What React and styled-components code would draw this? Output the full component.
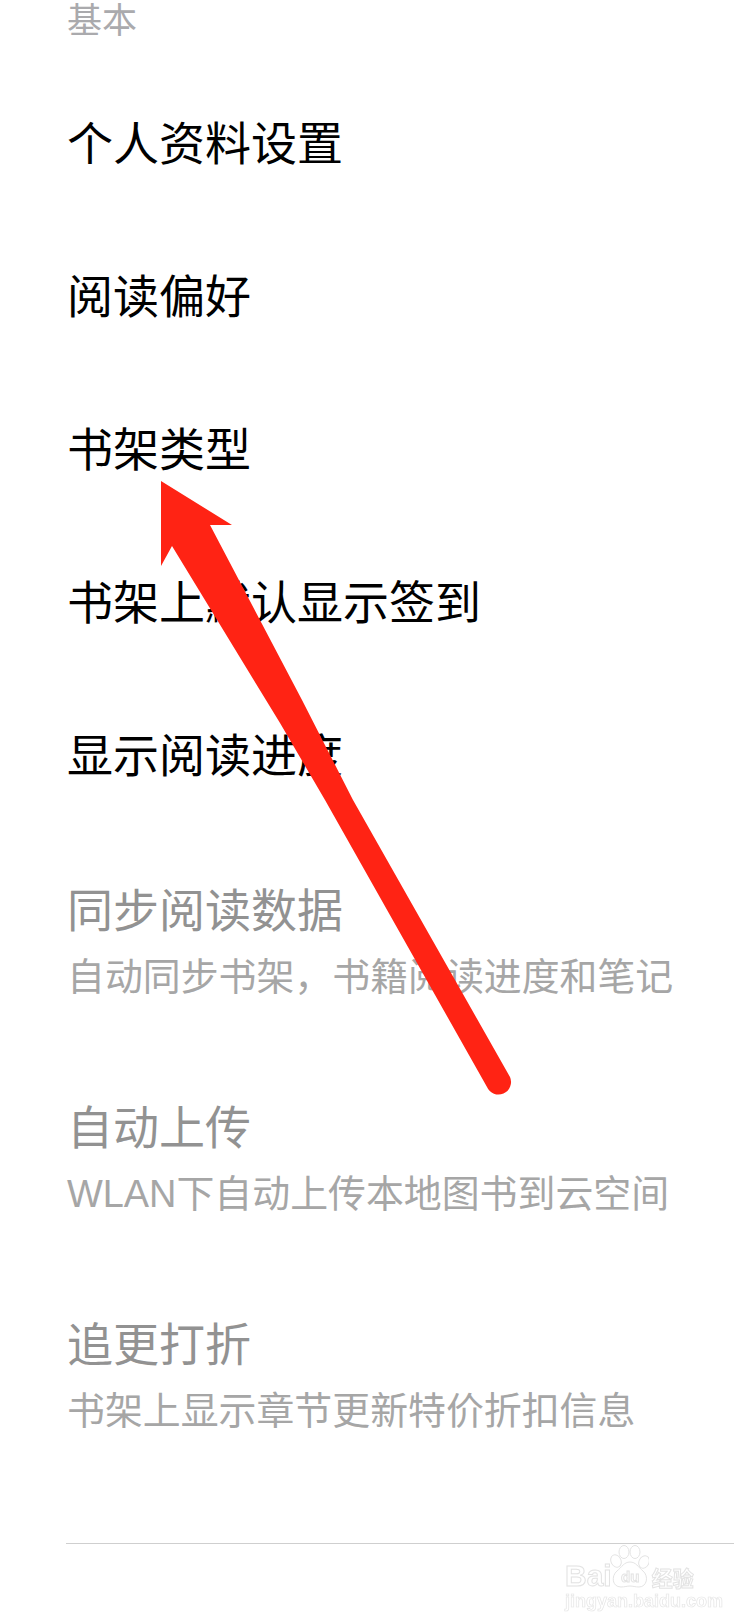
import React from 'react';
import styled, { createGlobalStyle } from 'styled-components';

const Global = createGlobalStyle`
    html, body { margin:0; padding:0; background:#fff; }
    body { font-family:"Liberation Sans","Noto Sans CJK SC",sans-serif; }
`;

const Page = styled.div`
    position:relative;
    width:734px;
    height:1624px;
    overflow:hidden;
    background:#fff;
`;

const SectionLabel = styled.div`
    height:36px;
    line-height:36px;
    padding:3px 0 0 67px;
    font-size:35px;
    color:#aaaaad;
`;

const List = styled.div`
    display:flex;
    flex-direction:column;
    padding-top:${p => p.$top}px;
`;

const Row = styled.div`
    display:flex;
    flex-direction:column;
    justify-content:center;
    padding-left:67px;
    height:${p => (p.$tall ? 217 : 153)}px;
`;

const RowTitle = styled.div`
    font-size:46px;
    line-height:60px;
    color:${p => (p.$off ? '#929292' : '#000')};
`;

const RowSub = styled.div`
    font-size:37.9px;
    line-height:50px;
    margin-top:11px;
    color:#a6a6a6;
    white-space:nowrap;
`;

const Divider = styled.div`
    margin:59px 0 0 66px;
    height:1px;
    background:#cfcfcf;
`;

const Arrow = styled.svg`
    position:absolute;
    left:0;
    top:0;
    width:734px;
    height:1624px;
    pointer-events:none;
`;

const Watermark = styled.div`
    position:absolute;
    left:565px;
    top:1545px;
    display:flex;
    flex-direction:column;
    gap:3px;
    color:transparent;
    filter:blur(.4px);
`;

const WmTop = styled.div`
    display:flex;
    align-items:flex-end;
`;

const WmBrand = styled.span`
    font-size:30px;
    font-weight:700;
    line-height:24px;
    margin-right:-2px;
    -webkit-text-stroke:1px #e3e3e3;
`;

const WmPaw = styled.svg`
    width:39px;
    height:43px;
    flex:none;
`;

const WmCn = styled.span`
    font-family:"Noto Sans CJK SC",sans-serif;
    font-size:21px;
    line-height:22px;
    font-weight:700;
    margin-left:3px;
    -webkit-text-stroke:1px #e3e3e3;
`;

const WmUrl = styled.span`
    font-size:18px;
    line-height:20px;
    font-weight:700;
    white-space:nowrap;
    -webkit-text-stroke:.7px #e6e6e6;
`;

const rows = [
    { title: '个人资料设置' },
    { title: '阅读偏好' },
    { title: '书架类型' },
    { title: '书架上默认显示签到' },
    { title: '显示阅读进度' },
];

const syncRows = [
    { title: '同步阅读数据', sub: '自动同步书架，书籍阅读进度和笔记' },
    { title: '自动上传', sub: 'WLAN下自动上传本地图书到云空间' },
    { title: '追更打折', sub: '书架上显示章节更新特价折扣信息' },
];

export default function App() {
    return (
        <Page>
            <Global />
            <SectionLabel>基本</SectionLabel>
            <List $top={28}>
                {rows.map(r => (
                    <Row key={r.title}>
                        <RowTitle>{r.title}</RowTitle>
                    </Row>
                ))}
            </List>
            <List $top={1}>
                {syncRows.map(r => (
                    <Row key={r.title} $tall>
                        <RowTitle $off>{r.title}</RowTitle>
                        <RowSub>{r.sub}</RowSub>
                    </Row>
                ))}
            </List>
            <Divider />
            <Arrow viewBox="0 0 734 1624">
                <path
                    d="M161 481 L232 525 L210 525 L302 700 L353 800 L510 1077 A12.5 12.5 0 0 1 487 1087 L325 800 L280 723 L172 546 L161 566 Z"
                    fill="#ff2314"
                />
            </Arrow>
            <Watermark>
                <WmTop>
                    <WmBrand>Bai</WmBrand>
                    <WmPaw viewBox="0 0 39 43" fill="none" stroke="#e3e3e3" strokeWidth="1">
                        <ellipse cx="6" cy="16" rx="5" ry="6.5" transform="rotate(-25 6 16)" />
                        <ellipse cx="14" cy="7" rx="5" ry="6.5" />
                        <ellipse cx="25" cy="7" rx="5" ry="6.5" />
                        <ellipse cx="34" cy="17" rx="5" ry="6.5" transform="rotate(25 34 17)" />
                        <path d="M20 17 C14 17 12 22 7 26 C1 31 2 42 11 42 C15 42 17 41 20 41 C23 41 25 42 29 42 C37 42 39 31 33 26 C28 22 26 17 20 17 Z" />
                        <text x="11" y="37" fontSize="15" fontWeight="700" fill="none">du</text>
                    </WmPaw>
                    <WmCn>经验</WmCn>
                </WmTop>
                <WmUrl>jingyan.baidu.com</WmUrl>
            </Watermark>
        </Page>
    );
}
